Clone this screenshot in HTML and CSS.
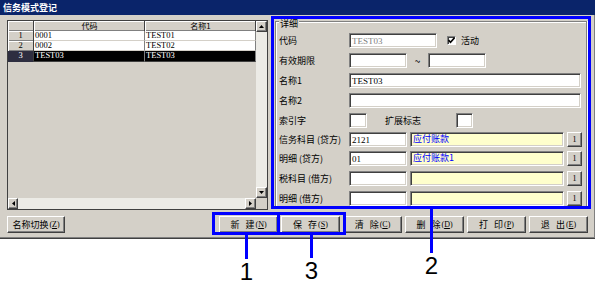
FILE: index.html
```html
<!DOCTYPE html>
<html lang="zh">
<head>
  <meta charset="UTF-8">
  <title>信务模式登记</title>
  <link rel="stylesheet" href="styles.css">
</head>
<body>
  <div class="stage">
    <!-- Window -->
    <div class="window">
      <div class="titlebar">信务模式登记</div>
      <div class="client">
        <div class="main">

          <!-- List grid -->
          <div class="grid">
            <div class="grid-top">
              <div class="grid-cells">
                <div class="grow head">
                  <div class="rh"></div>
                  <div class="cell">代码</div>
                  <div class="cell">名称1</div>
                </div>
                <div class="grow">
                  <div class="rh latin">1</div>
                  <div class="cell latin">0001</div>
                  <div class="cell latin">TEST01</div>
                </div>
                <div class="grow">
                  <div class="rh latin">2</div>
                  <div class="cell latin">0002</div>
                  <div class="cell latin">TEST02</div>
                </div>
                <div class="grow sel">
                  <div class="rh latin">3</div>
                  <div class="cell latin">TEST03</div>
                  <div class="cell latin">TEST03</div>
                </div>
              </div>
              <div class="vscroll">
                <div class="sbtn"><svg width="5" height="3" viewBox="0 0 5 3"><polygon points="0,3 5,3 2.5,0" fill="#000"/></svg></div>
                <div class="vtrack"></div>
                <div class="sbtn"><svg width="5" height="3" viewBox="0 0 5 3"><polygon points="0,0 5,0 2.5,3" fill="#000"/></svg></div>
              </div>
            </div>
            <div class="hscroll">
              <div class="sbtn narrow"><svg width="3" height="5" viewBox="0 0 3 5"><polygon points="3,0 3,5 0,2.5" fill="#000"/></svg></div>
              <div class="htrack"></div>
              <div class="sbtn"><svg width="3" height="5" viewBox="0 0 3 5"><polygon points="0,0 0,5 3,2.5" fill="#000"/></svg></div>
              <div class="corner"></div>
            </div>
          </div>

          <!-- Detail -->
          <div class="detail">
            <div class="group">
              <div class="legend">详细</div>
              <div class="rows">
                <div class="row">
                  <span class="label">代码</span>
                  <span class="field disabled w88">TEST03</span>
                  <span class="check"><svg width="7" height="7" viewBox="0 0 7 7"><polyline points="0.5,3 2.5,5.2 6.5,0.8" fill="none" stroke="#000" stroke-width="1.6"/></svg></span>
                  <span class="check-label">活动</span>
                </div>
                <div class="row">
                  <span class="label">有效期限</span>
                  <span class="field w58"></span>
                  <span class="tilde">~</span>
                  <span class="field w58"></span>
                </div>
                <div class="row">
                  <span class="label">名称1</span>
                  <span class="field w232">TEST03</span>
                </div>
                <div class="row">
                  <span class="label">名称2</span>
                  <span class="field w232"></span>
                </div>
                <div class="row">
                  <span class="label">索引字</span>
                  <span class="field w18"></span>
                  <span class="label2">扩展标志</span>
                  <span class="field w17"></span>
                </div>
                <div class="row tight">
                  <span class="label">信务科目 (贷方)</span>
                  <span class="field w58">2121</span>
                  <span class="field ref">应付账款</span>
                  <span class="pick">1</span>
                </div>
                <div class="row tight">
                  <span class="label">明细 (贷方)</span>
                  <span class="field w58">01</span>
                  <span class="field ref">应付账款1</span>
                  <span class="pick">1</span>
                </div>
                <div class="row">
                  <span class="label">税科目 (借方)</span>
                  <span class="field w58"></span>
                  <span class="field ref"></span>
                  <span class="pick">1</span>
                </div>
                <div class="row">
                  <span class="label">明细 (借方)</span>
                  <span class="field w58"></span>
                  <span class="field ref"></span>
                  <span class="pick">1</span>
                </div>
              </div>
            </div>
          </div>
        </div>

        <!-- Buttons -->
        <div class="buttons">
          <button class="btn switch">名称切换 <span class="key">(<u>Z</u>)</span></button>
          <button class="btn first">新<i class="sp"></i>建<span class="key">(<u>N</u>)</span></button>
          <button class="btn">保<i class="sp"></i>存<span class="key">(<u>S</u>)</span></button>
          <button class="btn">清<i class="sp"></i>除<span class="key">(<u>C</u>)</span></button>
          <button class="btn">删<i class="sp"></i>除<span class="key">(<u>D</u>)</span></button>
          <button class="btn">打<i class="sp"></i>印<span class="key">(<u>P</u>)</span></button>
          <button class="btn">退<i class="sp"></i>出<span class="key">(<u>E</u>)</span></button>
        </div>
      </div>
    </div>

    <!-- Annotations -->
    <div class="mark mark-new"></div>
    <div class="mark mark-save"></div>
    <div class="callout c1"><div class="stem"></div><div class="num">1</div></div>
    <div class="callout c3"><div class="stem"></div><div class="num">3</div></div>
    <div class="callout c2"><div class="stem"></div><div class="num">2</div></div>
  </div>
</body>
</html>
```

FILE: styles.css
```css
/* Reset */
* {
  margin: 0;
  padding: 0;
  box-sizing: border-box;
}
body {
  font-family: "Noto Sans CJK SC", "Liberation Sans", sans-serif;
  font-size: 9px;
  color: #000;
  background: #fff;
}
.latin {
  font-family: "Liberation Serif", "Noto Sans CJK SC", serif;
}
.stage {
  position: relative;
  width: 595px;
  height: 287px;
  overflow: hidden;
}

/* Window */
.window {
  width: 595px;
  height: 239px;
  background: #d4d0c8;
  border-bottom: 1px solid #404040;
  box-shadow: inset 0 -1px #808080, inset -1px 0 #808080;
}
.titlebar {
  height: 15px;
  line-height: 15px;
  padding-left: 3px;
  background: #0a246a;
  color: #fff;
  font-weight: bold;
}
.client {
  padding-left: 7px;
}
.main {
  display: flex;
  align-items: flex-start;
}

/* Grid */
.grid {
  margin-top: 5px;
  width: 261px;
  height: 190px;
  border: 1px solid #404040;
  display: flex;
  flex-direction: column;
}
.grid-top {
  display: flex;
  height: 177px;
}
.grid-cells {
  flex: 1;
}
.grow {
  display: flex;
  height: 10px;
  line-height: 9px;
  font-size: 8.5px;
}
.rh {
  width: 26px;
  text-align: center;
  background: #d4d0c8;
  border-right: 1px solid #404040;
  box-shadow: inset 1px 1px #fff, inset 0 -1px #808080;
}
.cell {
  width: 111px;
  padding-left: 1px;
  background: #fff;
  border-right: 1px solid #808080;
  border-bottom: 1px solid #d4d0c8;
  white-space: nowrap;
}
.head .cell {
  background: #d4d0c8;
  text-align: center;
  font-size: 8px;
  border-right: 1px solid #404040;
  border-bottom: 0;
  box-shadow: inset 1px 1px #fff, inset 0 -1px #808080;
}
.sel {
  height: 11px;
}
.sel .cell {
  background: #000;
  color: #fff;
  border-bottom: 1px solid #404040;
}
.sel .rh {
  background: #2e2e40;
  color: #fff;
  box-shadow: none;
}
.vscroll {
  width: 11px;
  display: flex;
  flex-direction: column;
}
.vtrack {
  flex: 1;
  background: #ecebe6;
}
.sbtn {
  width: 11px;
  height: 11px;
  flex: none;
  display: flex;
  align-items: center;
  justify-content: center;
  background: #d4d0c8;
  border: 1px solid;
  border-color: #fff #404040 #404040 #fff;
  box-shadow: inset -1px -1px #808080;
}
.sbtn.narrow {
  width: 10px;
}
.hscroll {
  display: flex;
  height: 11px;
}
.htrack {
  flex: 1;
  background: #ecebe6;
}
.corner {
  width: 11px;
  background: #d4d0c8;
}

/* Detail */
.detail {
  margin: 1px 0 0 3px;
  width: 320px;
  height: 193px;
  border: 3px solid #0000ff;
  padding: 2px 1px 0 1px;
}
.group {
  height: 100%;
  display: flex;
  flex-direction: column;
  padding-left: 3px;
  border: 1px solid #808080;
  border-bottom: 0;
  box-shadow: inset 1px 1px #fff, 1px 0 #fff;
}
.legend {
  align-self: flex-start;
  margin-top: -3px;
  padding: 0 1px;
  height: 10px;
  line-height: 10px;
  background: #d4d0c8;
}
.rows {
  margin-top: 4px;
  display: flex;
  flex-direction: column;
}
.row {
  display: flex;
  align-items: center;
  height: 15px;
}
.row + .row {
  margin-top: 5px;
}
.row.tight {
  margin-top: 4px;
}
.label {
  width: 70px;
  white-space: nowrap;
}
.label2 {
  width: 71px;
  margin-left: 18px;
}
.field {
  height: 15px;
  padding: 2px 0 0 2px;
  line-height: 10px;
  background: #fff;
  border: 1px solid;
  border-color: #808080 #fff #fff #808080;
  box-shadow: inset 1px 1px #404040, inset -1px -1px #d4d0c8;
  font-family: "Liberation Serif", "Noto Sans CJK SC", serif;
  font-size: 9px;
  white-space: nowrap;
  overflow: hidden;
}
.field.disabled {
  color: #808080;
}
.w88 { width: 88px; }
.w58 { width: 58px; }
.w232 { width: 232px; }
.w18 { width: 18px; }
.w17 { width: 17px; }
.field.ref {
  width: 154px;
  margin-left: 3px;
  padding-top: 1px;
  background: #ffffcc;
  color: #0000ff;
  font-family: "Noto Sans CJK SC", sans-serif;
}
.tilde {
  width: 21px;
  text-align: center;
  font-size: 10px;
}
.check {
  width: 9px;
  height: 9px;
  margin-left: 10px;
  display: flex;
  align-items: center;
  justify-content: center;
  background: #fff;
  border: 1px solid;
  border-color: #808080 #fff #fff #808080;
  box-shadow: inset 1px 1px #404040;
}
.check-label {
  margin-left: 5px;
}
.pick {
  width: 15px;
  height: 15px;
  margin-left: 3px;
  display: flex;
  align-items: center;
  justify-content: center;
  background: #d4d0c8;
  border: 1px solid;
  border-color: #fff #404040 #404040 #fff;
  box-shadow: inset -1px -1px #808080;
  font-family: "Liberation Serif", serif;
  font-size: 8px;
}

/* Buttons */
.buttons {
  display: flex;
  gap: 3px;
  margin-top: 6px;
  height: 17px;
}
.btn {
  width: 59px;
  height: 17px;
  display: flex;
  align-items: center;
  justify-content: center;
  background: #d4d0c8;
  border: 1px solid;
  border-color: #fff #404040 #404040 #fff;
  box-shadow: inset -1px -1px #808080;
  font-family: inherit;
  font-size: 9px;
  color: #000;
}
.btn.switch {
  width: 58px;
}
.btn.first {
  margin-left: 151px;
}
.sp {
  display: inline-block;
  width: 6px;
}
.key {
  font-family: "Liberation Serif", serif;
  font-size: 8px;
  margin-left: 1px;
}

/* Annotations */
.mark {
  position: absolute;
  top: 212px;
  height: 23px;
  border: 3px solid #0000ff;
}
.mark-new {
  left: 212px;
  width: 68px;
}
.mark-save {
  left: 277px;
  width: 69px;
}
.callout {
  position: absolute;
  width: 21px;
  display: flex;
  flex-direction: column;
  align-items: center;
}
.stem {
  width: 3px;
  background: #0000ff;
}
.num {
  margin-top: 1px;
  font-family: "Liberation Sans", Arial, sans-serif;
  font-size: 24px;
  line-height: 24px;
}
.c1 {
  left: 236px;
  top: 235px;
}
.c1 .stem {
  height: 24px;
}
.c3 {
  left: 301px;
  top: 235px;
}
.c3 .stem {
  height: 23px;
}
.c2 {
  left: 421px;
  top: 208px;
}
.c2 .stem {
  height: 45px;
}
```
